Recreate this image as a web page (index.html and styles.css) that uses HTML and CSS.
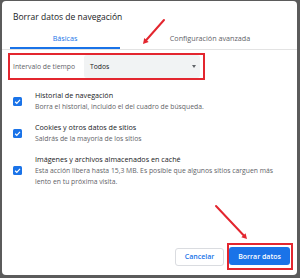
FILE: index.html
```html
<!DOCTYPE html>
<html lang="es">
<head>
    <meta charset="UTF-8" />
    <meta name="viewport" content="width=device-width, initial-scale=1.0" />
    <title>Borrar datos de navegación</title>
    <link rel="stylesheet" href="styles.css">
</head>
<body>
    <div class="dialog">
        <h1 class="title">Borrar datos de navegación</h1>
        <div class="tabs">
            <div class="tab active">Básicas</div>
            <div class="tab">Configuración avanzada</div>
        </div>

        <div class="range mark">
            <span class="range-label">Intervalo de tiempo</span>
            <div class="select">
                <span>Todos</span>
                <span class="caret"></span>
            </div>
        </div>

        <ul class="options">
            <li class="option">
                <svg class="check" viewBox="0 0 9 9" width="9" height="9">
                    <rect width="9" height="9" rx="1.5" fill="#1a73e8" />
                    <path d="M2.1 4.7 L3.8 6.3 L7 2.9" fill="none" stroke="#fff" stroke-width="1.2" />
                </svg>
                <div>
                    <div class="opt-title">Historial de navegación</div>
                    <div class="opt-desc">Borra el historial, incluido el del cuadro de búsqueda.</div>
                </div>
            </li>
            <li class="option">
                <svg class="check" viewBox="0 0 9 9" width="9" height="9">
                    <rect width="9" height="9" rx="1.5" fill="#1a73e8" />
                    <path d="M2.1 4.7 L3.8 6.3 L7 2.9" fill="none" stroke="#fff" stroke-width="1.2" />
                </svg>
                <div>
                    <div class="opt-title">Cookies y otros datos de sitios</div>
                    <div class="opt-desc">Saldrás de la mayoría de los sitios</div>
                </div>
            </li>
            <li class="option">
                <svg class="check" viewBox="0 0 9 9" width="9" height="9">
                    <rect width="9" height="9" rx="1.5" fill="#1a73e8" />
                    <path d="M2.1 4.7 L3.8 6.3 L7 2.9" fill="none" stroke="#fff" stroke-width="1.2" />
                </svg>
                <div>
                    <div class="opt-title">Imágenes y archivos almacenados en caché</div>
                    <div class="opt-desc">Esta acción libera hasta 15,3 MB. Es posible que algunos sitios carguen más lento en tu próxima visita.</div>
                </div>
            </li>
        </ul>

        <div class="footer">
            <button class="btn btn-cancel">Cancelar</button>
            <div class="mark btn-mark">
                <button class="btn btn-primary">Borrar datos</button>
            </div>
        </div>
    </div>

    <!-- red annotation arrows -->
    <svg class="arrows" viewBox="0 0 300 278" width="300" height="278">
        <line x1="164" y1="20" x2="145" y2="41.5" stroke="#e3262f" stroke-width="2" stroke-linecap="round" />
        <polygon points="143,44 148.7,42.1 144.2,38.1" fill="#e3262f" />
        <line x1="216" y1="206" x2="244.5" y2="236.3" stroke="#e3262f" stroke-width="2" stroke-linecap="round" />
        <polygon points="247,239 245.6,233.2 241.3,237.3" fill="#e3262f" />
    </svg>
</body>
</html>
```

FILE: styles.css
```css
* {
    box-sizing: border-box;
}
body {
    margin: 0;
    width: 300px;
    height: 278px;
    padding: 1px 3px 3px 2px;
    background: #5b5b5b;
    font-family: "Open Sans", "Noto Sans", sans-serif;
    color: #202124;
    overflow: hidden;
}
.dialog {
    height: 274px;
    background: #fff;
    border-radius: 4px;
    display: flex;
    flex-direction: column;
}
.title {
    margin: 0;
    padding: 9px 0 0 11px;
    font-size: 8.5px;
    font-weight: 400;
    line-height: 14px;
    color: #202124;
}
.tabs {
    display: flex;
    gap: 35px;
    margin-top: 8px;
    padding-left: 8px;
    border-bottom: 1px solid #e3e3e3;
}
.tab {
    width: 110px;
    text-align: center;
    font-size: 7.2px;
    line-height: 12px;
    padding-bottom: 3px;
    color: #5f6368;
    border-bottom: 2px solid transparent;
}
.tab.active {
    color: #1a73e8;
    border-bottom-color: #1a73e8;
}
.mark {
    border: 2px solid #e3262f;
}
.range {
    width: 197px;
    height: 27px;
    margin: 3px 0 0 6px;
    padding: 0 3px;
    display: flex;
    justify-content: space-between;
    align-items: stretch;
}
.range-label {
    align-self: center;
    font-size: 6.8px;
    color: #5f6368;
}
.select {
    width: 116px;
    background: #f1f3f4;
    border-radius: 3px;
    display: flex;
    align-items: center;
    padding: 0 4px 0 6px;
    font-size: 6.8px;
    color: #202124;
}
.caret {
    margin-left: auto;
    border-left: 2.5px solid transparent;
    border-right: 2.5px solid transparent;
    border-top: 3px solid #5f6368;
}
.options {
    list-style: none;
    margin: 10px 0 0;
    padding: 0 0 0 11px;
    display: flex;
    flex-direction: column;
    gap: 10px;
}
.option {
    display: flex;
    align-items: center;
    gap: 13px;
}
.check {
    flex: none;
}
.opt-title {
    font-size: 7.2px;
    line-height: 11px;
    color: #202124;
}
.opt-desc {
    font-size: 6.8px;
    line-height: 11px;
    color: #5f6368;
    max-width: 245px;
}
.footer {
    margin-top: auto;
    display: flex;
    justify-content: flex-end;
    align-items: center;
    gap: 3px;
    padding: 0 4px 5px 0;
}
.btn-mark {
    padding: 2px 1px 3px 0;
}
.btn {
    display: block;
    height: 18px;
    border-radius: 3px;
    font-family: inherit;
    font-size: 7px;
    font-weight: 600;
    padding: 0;
    cursor: pointer;
}
.btn-cancel {
    width: 49px;
    background: #fff;
    color: #1a73e8;
    border: 1px solid #dadce0;
}
.btn-primary {
    width: 61px;
    background: #1a73e8;
    color: #fff;
    border: none;
}
.arrows {
    position: absolute;
    top: 0;
    left: 0;
    pointer-events: none;
}
```
